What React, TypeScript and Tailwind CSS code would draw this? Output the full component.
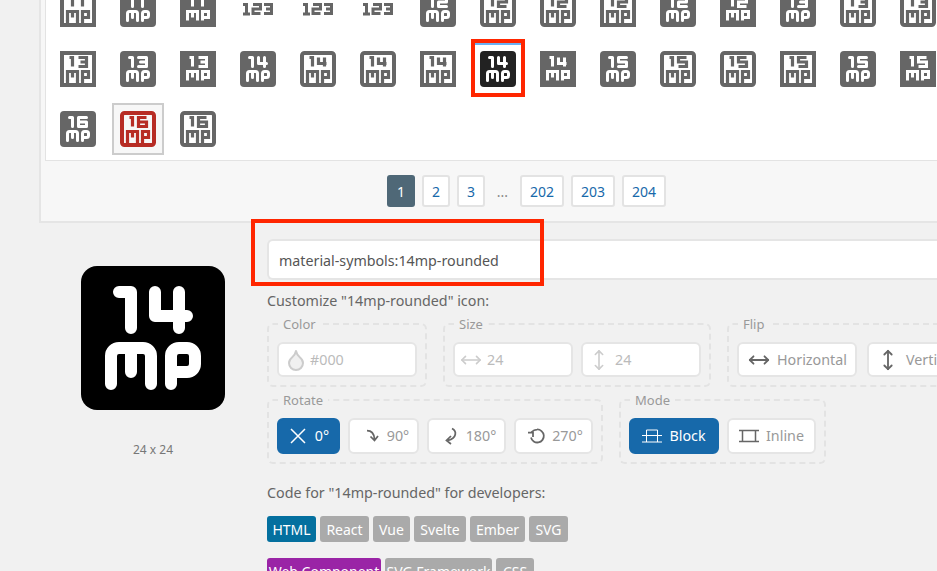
import { Droplet, MoveHorizontal, MoveVertical } from "lucide-react";
import type { ReactNode } from "react";

type Kind = "fr" | "fs" | "or" | "os" | "n";
type Cell = [string, Kind];

const first: Record<string, string> = {
  "1": "M7.75 6.25H9.25V10.75",
};
const second: Record<string, string> = {
  "1": "M12.75 6.25H14.25V10.75",
  "2": "M12.25 6.25H16.25V8.5H12.25V10.75H16.25",
  "3": "M12.25 6.25H16.25V10.75H12.25M13.25 8.5H16.25",
  "4": "M12.25 6.25V9.25H16.25M15.25 6.25V10.75",
  "5": "M16.25 6.25H12.25V8.5H16.25V10.75H12.25",
  "6": "M16.25 6.25H12.25V10.75H16.25V8.5H12.25",
};
const mpSharp = "M6.75 17.75V13.25H11.75V17.75M9.25 13.25V16.25M14.25 17.75V13.25H17.25V16.25H14.25";
const mpRound =
  "M6.75 17.75V14.25a1 1 0 0 1 1-1H10.75a1 1 0 0 1 1 1V17.75M9.25 13.25V16.25M14.25 17.75V14.25a1 1 0 0 1 1-1H16.25a1 1 0 0 1 1 1V15.25a1 1 0 0 1-1 1H14.25";

const rows: Cell[][] = [
  [["11", "os"], ["11", "fr"], ["11", "fs"], ["123", "n"], ["123", "n"], ["123", "n"], ["12", "fr"], ["12", "or"], ["12", "or"], ["12", "os"], ["12", "fr"], ["12", "fs"], ["13", "fr"], ["13", "or"], ["13", "or"]],
  [["13", "os"], ["13", "fr"], ["13", "fs"], ["14", "fr"], ["14", "or"], ["14", "or"], ["14", "os"], ["14", "fr"], ["14", "fs"], ["15", "fr"], ["15", "or"], ["15", "or"], ["15", "os"], ["15", "fr"], ["15", "fs"]],
  [["16", "fr"], ["16", "or"], ["16", "or"]],
];

const MpIcon = ({ n, kind, size = 48, crop = false, className = "" }: { n: string; kind: Kind; size?: number; crop?: boolean; className?: string }) => {
  const viewBox = crop ? "3 3 18 18" : "0 0 24 24";
  if (kind === "n") {
    return (
      <svg width={size} height={size} viewBox={viewBox} className={className} fill="none" stroke="currentColor" strokeWidth="1.5">
        <path d="M4.5 9.75H6.25V15M4.5 14.5H8M9.5 9.75H13.25V12H9.5V14.25H13.25M15 9.75H18.75V14.25H15M16 12H18.75" />
      </svg>
    );
  }
  const filled = kind[0] === "f";
  const round = kind[1] === "r";
  const ink = filled ? "#fff" : "currentColor";
  return (
    <svg width={size} height={size} viewBox={viewBox} className={className} fill="none">
      {filled ? (
        <rect x="3" y="3" width="18" height="18" rx={round ? 2 : 0} fill="currentColor" />
      ) : (
        <rect x="4" y="4" width="16" height="16" rx={round ? 1.25 : 0} stroke="currentColor" strokeWidth="2" />
      )}
      <g stroke={ink} strokeWidth={filled ? 1.5 : 1.6} strokeLinecap={filled && round ? "round" : "butt"} strokeLinejoin={filled && round ? "round" : "miter"}>
        <path d={first[n[0]]} />
        <path d={second[n[1]]} />
        <path d={filled && round ? mpRound : mpSharp} />
        {!filled && <path d="M6.75 17.5V19.5M11.75 17.5V19.5M14.25 17.5V19.5" />}
      </g>
    </svg>
  );
};

const Field = ({ label, gap = "gap-2", children }: { label: string; gap?: string; children: ReactNode }) => (
  <fieldset className="border-2 border-dashed border-[#e3e3e3] rounded-md px-2 pt-[9px] pb-2">
    <legend className="ml-[1px] px-[5px] text-[13px] leading-[18px] text-[#999]">{label}</legend>
    <div className={`flex ${gap}`}>{children}</div>
  </fieldset>
);

const OptionButton = ({ active, width, icon, label, extra = "justify-center h-9" }: { active?: boolean; width: string; icon: ReactNode; label: string; extra?: string }) => (
  <div
    className={`${width} ${extra} flex-none flex items-center gap-[7px] rounded-md border-2 text-[14.3px] ${
      active ? "bg-[#1769aa] border-[#1769aa] text-white" : "bg-white border-[#e5e5e5] text-[#999]"
    }`}
  >
    {icon}
    <span>{label}</span>
  </div>
);

const SizeInput = ({ icon }: { icon: ReactNode }) => (
  <div className="w-[120px] h-[35px] flex items-center gap-[5px] pl-[5px] pt-px rounded-md border-2 border-[#e5e5e5] bg-white text-[14.3px] text-[#bbb]">
    {icon}
    <span>24</span>
  </div>
);

const Tab = ({ label, width, color = "bg-[#aaa]" }: { label: string; width: string; color?: string }) => (
  <div className={`${width} h-[26px] flex items-center justify-center rounded-[3px] ${color} text-[14px] text-white`}>{label}</div>
);

const PageButton = ({ label, width = "w-7" }: { label: string; width?: string }) => (
  <div className={`${width} h-8 flex items-center justify-center rounded-[3px] border-2 border-[#e3e3e3] bg-white text-[14px] text-[#1769aa]`}>{label}</div>
);

export default function App() {
  return (
    <div className="relative w-[937px] h-[571px] overflow-hidden bg-[#f1f1f1] font-['Noto_Sans',sans-serif] text-[#666]">
      {/* icon list panel, scrolled so its top is out of view */}
      <div className="ml-[39px] mt-[-40px] w-[1000px] pl-1 pt-1 pb-[14px] border-2 border-r-0 border-[#e5e5e5] bg-[#f7f7f7]">
        <div className="w-[1000px] pl-[2px] pt-3 pb-[1px] border border-r-0 border-[#e3e3e3] bg-white">
          {rows.map((row, i) => (
            <div key={i} className="flex h-[60px]">
              {row.map(([n, kind], j) => {
                const selected = i === 2 && j === 1;
                const hovered = i === 1 && j === 7;
                return (
                  <div key={j} className="w-[60px] h-[60px] flex-none flex items-center justify-center">
                    {selected ? (
                      <div className="w-[52px] h-[52px] flex-none border-2 border-[#ccc] bg-[#f7f7f7]">
                        <MpIcon n={n} kind={kind} className="text-[#b72c24]" />
                      </div>
                    ) : (
                      <MpIcon n={n} kind={kind} className={hovered ? "text-[#222]" : "text-[#666]"} />
                    )}
                  </div>
                );
              })}
            </div>
          ))}
        </div>

        <div className="flex items-center gap-[7px] mt-[14px] ml-[342px]">
          <div className="w-7 h-8 flex items-center justify-center rounded-[3px] bg-[#4f6877] text-[14px] text-white">1</div>
          <PageButton label="2" />
          <PageButton label="3" />
          <span className="w-[21px] text-center text-[14px] text-[#888]">...</span>
          <PageButton label="202" width="w-11" />
          <PageButton label="203" width="w-11" />
          <PageButton label="204" width="w-11" />
        </div>
      </div>

      <div className="flex mt-4">
        <div className="w-[267px] flex-none pl-[81px] pt-[27px]">
          <MpIcon n="14" kind="fr" size={144} crop className="text-black" />
          <div className="w-36 mt-[32px] text-center text-[12px] leading-4 text-[#777]">24 x 24</div>
        </div>

        <div className="flex-none whitespace-nowrap">
          <div className="w-[700px] h-[41px] flex items-center pl-[10px] pt-[2px] rounded-l-md border-2 border-r-0 border-[#e5e5e5] bg-white text-[14.25px] text-[#555]">
            material-symbols:14mp-rounded
          </div>
          <div className="mt-[11px] text-[14.3px] leading-5">Customize "14mp-rounded" icon:</div>

          <div className="flex gap-4 mt-[4px]">
            <Field label="Color">
              <div className="w-[140px] h-[35px] flex items-center gap-[2px] pl-[5px] pt-px rounded-md border-2 border-[#e5e5e5] bg-white text-[14.3px] text-[#bbb]">
                <Droplet size={24} strokeWidth={2} className="text-[#ccc] fill-[#f0f0f0]" />
                <span>#000</span>
              </div>
            </Field>
            <Field label="Size">
              <SizeInput icon={<MoveHorizontal size={22} strokeWidth={1.75} className="text-[#ccc]" />} />
              <SizeInput icon={<MoveVertical size={22} strokeWidth={1.75} className="text-[#ccc]" />} />
            </Field>
            <Field label="Flip" gap="gap-[10px]">
              <OptionButton width="w-[120px]" extra="justify-start h-[35px] pl-[9px] pt-px" icon={<MoveHorizontal size={22} strokeWidth={2} className="text-[#666]" />} label="Horizontal" />
              <OptionButton width="w-[120px]" extra="justify-start h-[35px] pl-2 pt-px" icon={<MoveVertical size={22} strokeWidth={2} className="text-[#666]" />} label="Vertical" />
            </Field>
          </div>

          <div className="flex gap-4 mt-[4px]">
            <Field label="Rotate">
              <OptionButton
                active
                width="w-[63px]"
                icon={
                  <svg width="20" height="20" viewBox="0 0 20 20" fill="none" stroke="#fff" strokeWidth="1.5">
                    <path d="M3 3L17 17M17 3L3 17" />
                  </svg>
                }
                label="0°"
              />
              <OptionButton
                width="w-[71px]"
                extra="justify-center h-9 pl-[6px]"
                icon={
                  <svg width="16" height="16" viewBox="0 0 16 16" fill="none" stroke="#666" strokeWidth="1.75">
                    <path d="M3 2.5C7 2.5 10 4 10.5 11M6.5 8.5L10.5 12.5L14 8" />
                  </svg>
                }
                label="90°"
              />
              <OptionButton
                width="w-[79px]"
                extra="justify-center h-9 pl-[6px]"
                icon={
                  <svg width="16" height="18" viewBox="0 0 16 18" fill="none" stroke="#666" strokeWidth="1.75">
                    <path d="M9 1.5C14 4 14 11 5 13.5M8 9L3.5 13.5L8 17" />
                  </svg>
                }
                label="180°"
              />
              <OptionButton
                width="w-[79px]"
                extra="justify-center h-9 pl-[3px]"
                icon={
                  <svg width="18" height="16" viewBox="0 0 18 16" fill="none" stroke="#666" strokeWidth="1.75">
                    <path d="M4.5 4C6 2.5 8 1.5 10 1.5A6.5 6.5 0 1 1 4 9.5M1 4.5H6V9" />
                  </svg>
                }
                label="270°"
              />
            </Field>
            <Field label="Mode">
              <OptionButton
                active
                width="w-[90px]"
                icon={
                  <svg width="20" height="14" viewBox="0 0 20 14" fill="none" stroke="#fff" strokeWidth="1">
                    <path d="M4.5 13V1H15.5V13M0 6.5H20M0 13H20" />
                  </svg>
                }
                label="Block"
              />
              <OptionButton
                width="w-[89px]"
                icon={
                  <svg width="20" height="14" viewBox="0 0 20 14" fill="none" stroke="#666" strokeWidth="1.5">
                    <path d="M3.5 1.5H16.5V12.5H3.5ZM0 1.5H20M0 12.5H20" />
                  </svg>
                }
                label="Inline"
              />
            </Field>
          </div>

          <div className="mt-[19px] text-[14.3px] leading-5">Code for "14mp-rounded" for developers:</div>

          <div className="flex gap-1 mt-[13px]">
            <Tab label="HTML" width="w-[49px]" color="bg-[#04709f]" />
            <Tab label="React" width="w-[49px]" />
            <Tab label="Vue" width="w-[37px]" />
            <Tab label="Svelte" width="w-[52px]" />
            <Tab label="Ember" width="w-[55px]" />
            <Tab label="SVG" width="w-[39px]" />
          </div>
          <div className="flex gap-1 mt-4">
            <Tab label="Web Component" width="w-[114px]" color="bg-[#9a24a6]" />
            <Tab label="SVG Framework" width="w-[107px]" />
            <Tab label="CSS" width="w-[38px]" />
          </div>
        </div>
      </div>

      <div className="absolute left-[475px] top-[43px] w-[46px] h-[2px] bg-[#6ab0f3]" />
      <div className="absolute left-[471px] top-[39px] w-[54px] h-[58px] border-4 border-[#ff2600]" />
      <div className="absolute left-[251px] top-[219px] w-[293px] h-[67px] border-4 border-[#ff2600]" />
    </div>
  );
}
